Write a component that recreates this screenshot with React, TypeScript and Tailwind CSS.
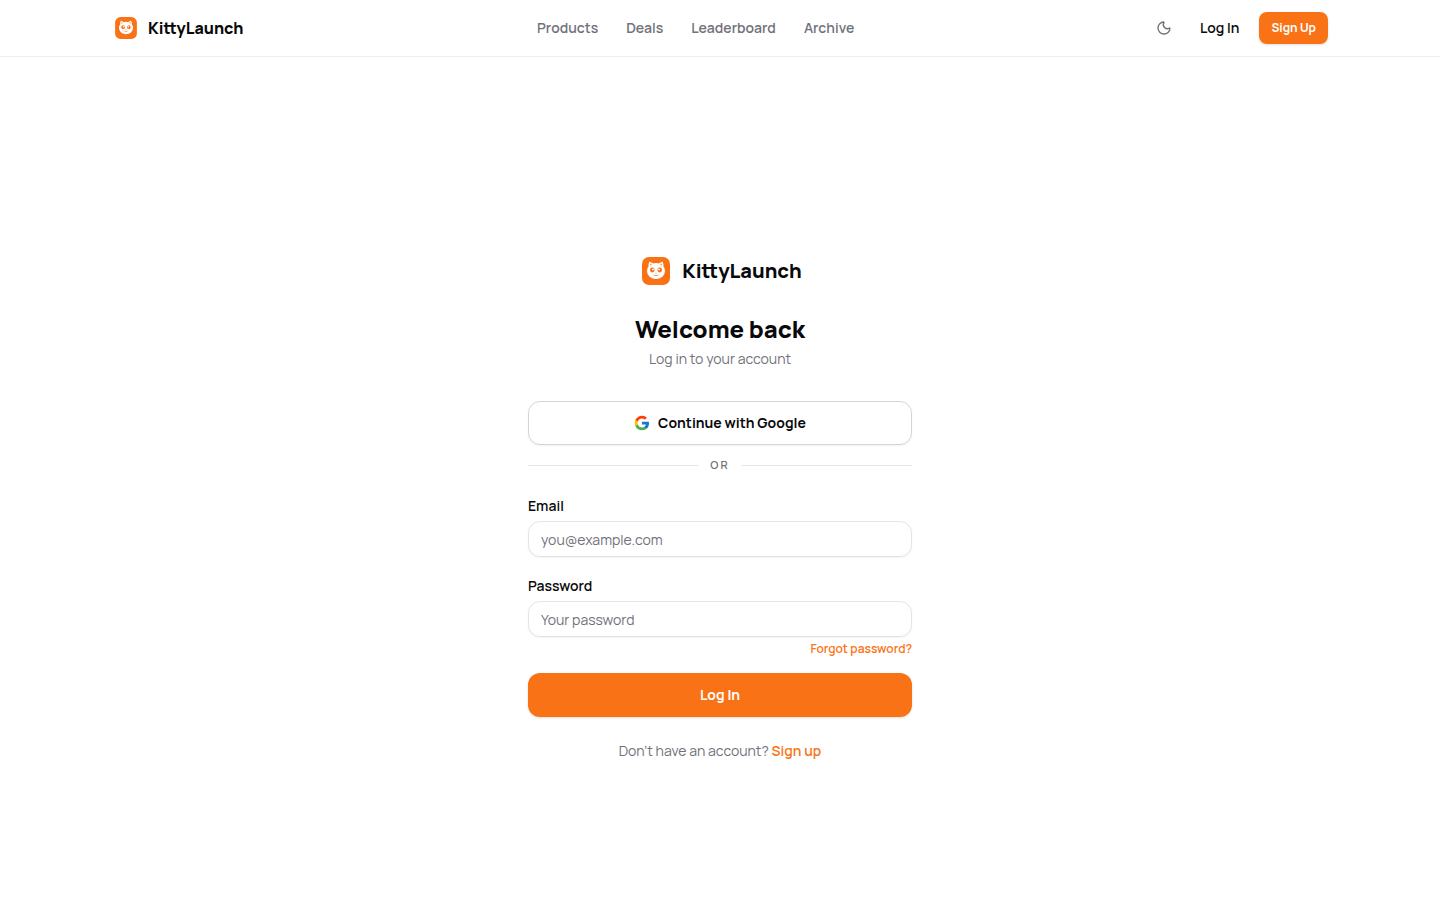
import { useState } from 'react';
import { Moon } from 'lucide-react';

const navLinks = ['Products', 'Deals', 'Leaderboard', 'Archive'];

const labelClass = 'mb-2 block text-sm leading-none font-semibold';
const inputClass =
    'h-9 w-full rounded-xl border border-[#e4e4e7] bg-white px-3 text-sm text-[#09090b] shadow-xs outline-none placeholder:text-[#71717a] focus:border-[#f97316]';

const KittyLogo = ({ className }: { className?: string }) => (
    <svg viewBox="0 0 36 36" className={className} aria-hidden="true">
        <rect x="4" y="4" width="28" height="28" rx="7" fill="#f97316" />
        <path d="M11 15.500c-.7-2.500-.6-5 .2-6.300.3-.5.8-.6 1.300-.3 1.300.5 2.500 1.400 3.300 2.600ZM25 15.500c.7-2.500.6-5-.2-6.300-.3-.5-.8-.6-1.300-.3-1.300.5-2.500 1.400-3.300 2.600Z" fill="#fff" />
        <ellipse cx="18" cy="18" rx="9" ry="8" fill="#fff" />
        <path d="M12.200 10.400l1.500 1-1.400 1.300ZM23.800 10.400l-1.500 1 1.400 1.300Z" fill="#f97316" />
        <ellipse cx="14.300" cy="17" rx="2.300" ry="2.400" fill="#f97316" />
        <ellipse cx="21.700" cy="17" rx="2.300" ry="2.400" fill="#f97316" />
        <circle cx="15" cy="16.400" r=".9" fill="#fff" />
        <circle cx="21" cy="16.400" r=".9" fill="#fff" />
        <path d="M17.200 19.700h1.600l-.8.9Z" fill="#f97316" />
        <path d="M15.800 21.900c.7 1 1.700 1 2.200 0 .5 1 1.500 1 2.200 0" fill="none" stroke="#f97316" strokeWidth=".8" strokeLinecap="round" />
    </svg>
);

const GoogleIcon = () => (
    <svg viewBox="0 0 24 24" className="size-4" aria-hidden="true">
        <path fill="#1976d2" d="M22.500 12.300c0-.8-.1-1.500-.2-2.200H12v4.200h5.900c-.3 1.400-1 2.500-2.200 3.300v2.800h3.600c2.100-1.900 3.200-4.800 3.200-8.100Z" />
        <path fill="#4caf50" d="M12 23c3 0 5.500-1 7.300-2.600l-3.600-2.800c-1 .7-2.200 1.100-3.700 1.100-2.900 0-5.300-1.900-6.200-4.500H2.200V17c1.800 3.600 5.500 6 9.800 6Z" />
        <path fill="#ffc107" d="M5.800 14.100c-.2-.7-.4-1.400-.4-2.100s.1-1.400.4-2.100V7.100H2.200C1.400 8.600 1 10.200 1 12s.4 3.400 1.200 4.900l3.600-2.800Z" />
        <path fill="#ff3d00" d="M12 5.400c1.600 0 3.100.6 4.200 1.600l3.200-3.100C17.500 2.100 15 1 12 1 7.700 1 4 3.500 2.200 7.100l3.600 2.800C6.700 7.300 9.100 5.400 12 5.400Z" />
    </svg>
);

const Header = () => (
    <header className="border-b border-[#ededee] bg-white">
        <div className="mx-auto flex h-14 max-w-7xl items-center justify-between px-8">
            <a href="#" className="flex items-center gap-2">
                <KittyLogo className="size-7" />
                <span className="text-base font-extrabold">KittyLaunch</span>
            </a>
            <nav className="flex items-center gap-7">
                {navLinks.map(link => (
                    <a key={link} href="#" className="text-sm font-semibold text-[#71717a] hover:text-[#09090b]">{link}</a>
                ))}
            </nav>
            <div className="flex items-center gap-2">
                <button type="button" aria-label="Toggle theme" className="flex size-8 items-center justify-center rounded-lg text-[#71717a]">
                    <Moon className="size-4" />
                </button>
                <a href="#" className="px-3 text-sm font-semibold">Log In</a>
                <button type="button" className="h-8 rounded-lg bg-[#f97316] px-3 text-xs font-bold text-white shadow-sm">Sign Up</button>
            </div>
        </div>
    </header>
);

const LoginForm = () => {
    const [email, setEmail] = useState('');
    const [password, setPassword] = useState('');

    return (
        <div className="w-full max-w-96">
            <a href="#" className="flex items-center justify-center gap-2">
                <KittyLogo className="size-9" />
                <span className="text-xl font-extrabold">KittyLaunch</span>
            </a>
            <h1 className="mt-6 text-center text-2xl font-extrabold">Welcome back</h1>
            <p className="mt-1 text-center text-sm text-[#71717a]">Log in to your account</p>

            <button type="button" className="mt-8 flex h-11 w-full items-center justify-center gap-2 rounded-xl border border-[#d4d4d8] text-sm font-bold shadow-xs">
                <GoogleIcon />
                Continue with Google
            </button>

            <div className="mt-3 flex items-center gap-3">
                <span className="h-px flex-1 bg-[#e4e4e7]" />
                <span className="text-[11px] leading-4 font-semibold tracking-[2px] text-[#71717a]">OR</span>
                <span className="h-px flex-1 bg-[#e4e4e7]" />
            </div>

            <form className="mt-[26px]" onSubmit={e => e.preventDefault()}>
                <div className="flex flex-col gap-[22px]">
                    <div>
                        <label htmlFor="email" className={labelClass}>Email</label>
                        <input id="email" type="email" placeholder="you@example.com" value={email} onChange={e => setEmail(e.target.value)} className={inputClass} />
                    </div>
                    <div>
                        <label htmlFor="password" className={labelClass}>Password</label>
                        <input id="password" type="password" placeholder="Your password" value={password} onChange={e => setPassword(e.target.value)} className={inputClass} />
                    </div>
                </div>
                <div className="mt-1 flex justify-end">
                    <a href="#" className="text-xs font-semibold text-[#f97316]">Forgot password?</a>
                </div>
                <button type="submit" className="mt-4 h-11 w-full rounded-xl bg-[#f97316] text-sm font-bold text-white shadow-sm">Log In</button>
            </form>

            <p className="mt-6 text-center text-sm text-[#71717a]">
                Don't have an account? <a href="#" className="font-semibold text-[#f97316]">Sign up</a>
            </p>
        </div>
    );
};

const App = () => (
    <div className="flex min-h-screen flex-col bg-white font-['Manrope','Inter',sans-serif] text-[#09090b]">
        <Header />
        <main className="flex flex-1 items-center justify-center px-4 pt-[57px]">
            <LoginForm />
        </main>
    </div>
);

export default App;
